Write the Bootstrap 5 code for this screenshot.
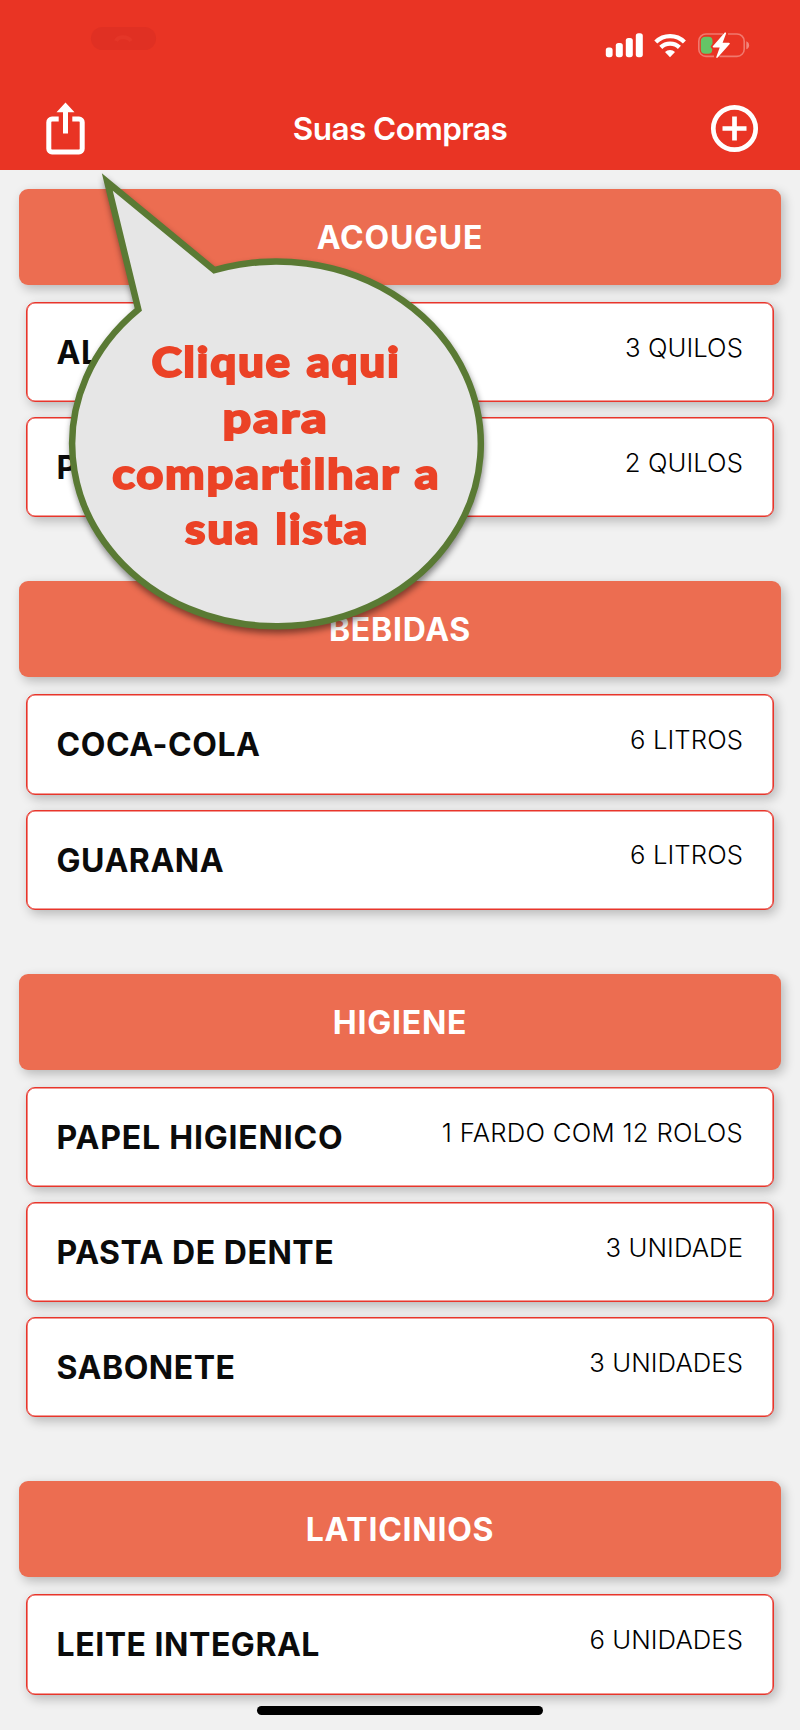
<!DOCTYPE html>
<html lang="pt-BR">
<head>
<meta charset="utf-8">
<meta name="viewport" content="width=device-width, initial-scale=1">
<title>Suas Compras</title>
<link href="https://cdn.jsdelivr.net/npm/bootstrap@5.3.0/dist/css/bootstrap.min.css" rel="stylesheet">
<style>
  body { background: #f1f1f1; font-family: Inter, "Liberation Sans", sans-serif; color: #0b0b0b; }
  .phone { width: 800px; height: 1730px; }
  .app-top { background: #e93424; height: 170px; }
  .status-row { height: 88px; padding: 27px 50px 0 91px; }
  .title-row { height: 81px; padding: 0 41px 0 46px; }
  .app-title { font-size: 31.5px; font-weight: 600; line-height: 81px; letter-spacing: -.55px; }
  .island { width: 65px; height: 23px; background: #e03023; }
  .shop-list { padding: 18.9px 19px 0; }
  .shop-group { margin-bottom: 63.8px; }
  .group-head { height: 96.2px; margin-bottom: 16.9px; padding-top: 2px; border-radius: 9px; background: #ec6d51; font-size: 32px; font-weight: 700; letter-spacing: .75px; box-shadow: 3px 4px 11px rgba(0,0,0,.24); }
  .group-items { padding: 0 7.4px; gap: 14.9px; }
  .shop-item { height: 100.3px; border: 1px solid #e8352b; border-radius: 9px; padding: 0 29.6px 0 29.2px; box-shadow: inset 0 0 0 .6px #e8352b, 3px 4px 11px rgba(0,0,0,.24); }
  .item-name { font-size: 32px; font-weight: 700; letter-spacing: .52px; padding-top: 2px; }
  .item-name.wide { letter-spacing: .8px; }
  .item-qty { font-size: 25.7px; font-weight: 330; letter-spacing: .08px; color: #000; margin-bottom: 8px; }
  .item-qty.wide { letter-spacing: .27px; }
  .callout { left: 50px; top: 160px; filter: drop-shadow(1px 4px 3px rgba(0,0,0,.45)); pointer-events: none; }
  .callout text { font: 900 42.5px Lato, "Liberation Sans", sans-serif; font-variant-ligatures: none; letter-spacing: 1.5px; word-spacing: 2px; fill: #eb4226; stroke: #eb4226; stroke-width: 1.8px; }
  .home-bar { width: 286px; height: 9px; bottom: 15px; background: #000; }
</style>
</head>
<body>
<div class="phone position-relative overflow-hidden mx-auto">
  <header class="app-top text-white">
    <div class="status-row d-flex justify-content-between align-items-start">
      <div class="island rounded-pill d-flex justify-content-center">
        <svg width="20" height="23" viewBox="0 0 20 23"><path d="M2 14C4 9 14 9 17 14" fill="none" stroke="#e43628" stroke-width="4"/></svg>
      </div>
      <svg width="146" height="34" viewBox="604 27 146 34">
        <g fill="#fff">
          <rect x="605.8" y="47.5" width="6.8" height="9.7" rx="2.6"/>
          <rect x="615.8" y="43" width="7" height="14.2" rx="2.6"/>
          <rect x="625.8" y="38" width="7" height="19.2" rx="2.6"/>
          <rect x="635.8" y="33.2" width="7" height="24" rx="2.6"/>
          <path d="M670 57.2l-5-5.1a7 7 0 0 1 10 0z"/>
        </g>
        <g fill="none" stroke="#fff" stroke-width="4.3">
          <path d="M655.8 42a20.5 20.5 0 0 1 28.6 0"/>
          <path d="M660.8 47.4a13.2 13.2 0 0 1 18.6 0"/>
        </g>
        <path d="M723 34h-17a7.2 7.2 0 0 0-7.2 7.2v8a7.2 7.2 0 0 0 7.2 7.2h8M728 34h9a7.200 7.200 0 0 1 7.200 7.200v8a7.200 7.200 0 0 1-7.200 7.200h-17.500" fill="none" stroke="#fff" stroke-opacity=".34" stroke-width="1.6"/>
        <path d="M746.300 41.300q2.800 1 2.800 4t-2.800 4z" fill="#fff" fill-opacity=".4"/>
        <path d="M705.500 36.700h3q4 0 4 4v3l-2 3 1.800 2.500q0 4.500-4 4.500h-3q-4.500 0-4.500-4.500v-8q0-4.500 4.700-4.500z" fill="#65c466"/>
        <path d="M724.800 32.600 712.800 46.300q-.6 1 .8 1.100h6.100l-3.400 9.500q-.1 1.600 1.400.7l12-13.600q.7-1-.8-1.200h-6.300l3.500-9.400q.2-1.500-1.300-.8z" fill="#fff"/>
      </svg>
    </div>
    <div class="title-row d-flex justify-content-between align-items-center position-relative">
      <svg width="39" height="53" viewBox="46 102.500 39 53">
        <path d="M58.700 119.500H52a3.200 3.200 0 0 0-3.200 3.200v26.600a3.200 3.200 0 0 0 3.200 3.200h27a3.200 3.200 0 0 0 3.200-3.200v-26.600a3.200 3.200 0 0 0-3.200-3.200h-6.700" fill="none" stroke="#fff" stroke-width="5"/>
        <path d="M65.500 103l9 9.700H68V134h-5v-21.300h-6.500z" fill="#fff"/>
      </svg>
      <div class="app-title position-absolute start-0 end-0 text-center">Suas Compras</div>
      <svg width="49" height="49" viewBox="-24.500 -24.500 49 49" fill="none" stroke="#fff" stroke-width="4.700">
        <circle r="21.200"/><path d="M-12 0H12M0-12V12"/>
      </svg>
    </div>
  </header>

  <main class="shop-list">
    <section class="shop-group">
      <div class="group-head d-flex align-items-center justify-content-center text-white">ACOUGUE</div>
      <div class="group-items d-flex flex-column">
        <div class="shop-item bg-white d-flex justify-content-between align-items-center"><span class="item-name">AL</span><span class="item-qty">3 QUILOS</span></div>
        <div class="shop-item bg-white d-flex justify-content-between align-items-center"><span class="item-name">P</span><span class="item-qty">2 QUILOS</span></div>
      </div>
    </section>
    <section class="shop-group">
      <div class="group-head d-flex align-items-center justify-content-center text-white">BEBIDAS</div>
      <div class="group-items d-flex flex-column">
        <div class="shop-item bg-white d-flex justify-content-between align-items-center"><span class="item-name">COCA-COLA</span><span class="item-qty">6 LITROS</span></div>
        <div class="shop-item bg-white d-flex justify-content-between align-items-center"><span class="item-name">GUARANA</span><span class="item-qty">6 LITROS</span></div>
      </div>
    </section>
    <section class="shop-group">
      <div class="group-head d-flex align-items-center justify-content-center text-white">HIGIENE</div>
      <div class="group-items d-flex flex-column">
        <div class="shop-item bg-white d-flex justify-content-between align-items-center"><span class="item-name wide">PAPEL HIGIENICO</span><span class="item-qty wide">1 FARDO COM 12 ROLOS</span></div>
        <div class="shop-item bg-white d-flex justify-content-between align-items-center"><span class="item-name">PASTA DE DENTE</span><span class="item-qty">3 UNIDADE</span></div>
        <div class="shop-item bg-white d-flex justify-content-between align-items-center"><span class="item-name">SABONETE</span><span class="item-qty">3 UNIDADES</span></div>
      </div>
    </section>
    <section class="shop-group">
      <div class="group-head d-flex align-items-center justify-content-center text-white">LATICINIOS</div>
      <div class="group-items d-flex flex-column">
        <div class="shop-item bg-white d-flex justify-content-between align-items-center"><span class="item-name">LEITE INTEGRAL</span><span class="item-qty">6 UNIDADES</span></div>
      </div>
    </section>
  </main>

  <svg class="callout position-absolute" width="450" height="490" viewBox="50 160 450 490">
    <path d="M107.300 182L214.300 270.200A204.300 182.400 0 1 1 138.300 309.600Z" fill="#e6e6e6" stroke="#5a7a34" stroke-width="6.500" stroke-miterlimit="10"/>
    <text x="151.500" y="377" textLength="249" lengthAdjust="spacingAndGlyphs">Clique aqui</text>
    <text x="222.500" y="433.300" textLength="106" lengthAdjust="spacingAndGlyphs">para</text>
    <text x="112.300" y="488.500" textLength="328" lengthAdjust="spacingAndGlyphs">compartilhar a</text>
    <text x="185" y="543.500" textLength="184" lengthAdjust="spacingAndGlyphs">sua lista</text>
  </svg>
  <div class="home-bar position-absolute start-50 translate-middle-x rounded-pill"></div>
</div>
<script src="https://cdn.jsdelivr.net/npm/bootstrap@5.3.0/dist/js/bootstrap.bundle.min.js"></script>
</body>
</html>
